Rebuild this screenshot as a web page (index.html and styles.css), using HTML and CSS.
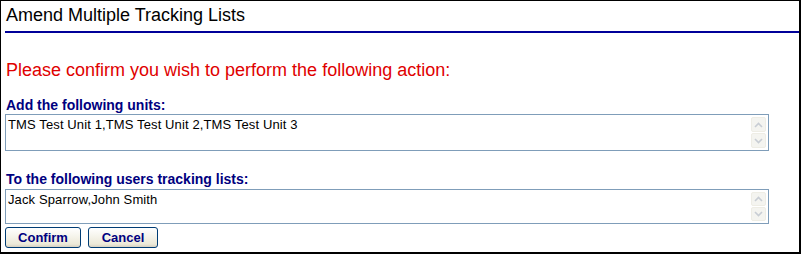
FILE: index.html
```html
<!DOCTYPE html>
<html>
<head>
<meta charset="utf-8">
<link rel="stylesheet" href="styles.css">
</head>
<body>
<div class="frame">
  <div class="title">Amend Multiple Tracking Lists</div>
  <div class="rule"></div>
  <div class="prompt">Please confirm you wish to perform the following action:</div>
  <div class="label first">Add the following units:</div>
  <div class="box tall">
    <div class="box-text">TMS Test Unit 1,TMS Test Unit 2,TMS Test Unit 3</div>
    <div class="scroll">
      <div class="sbtn"><svg width="9" height="6" viewBox="0 0 9 6"><path d="M1 5 L4.5 1.5 L8 5" fill="none" stroke="#c8cdd4" stroke-width="1.6"/></svg></div>
      <div class="sbtn"><svg width="9" height="6" viewBox="0 0 9 6"><path d="M1 1 L4.5 4.5 L8 1" fill="none" stroke="#c8cdd4" stroke-width="1.6"/></svg></div>
    </div>
  </div>
  <div class="label second">To the following users tracking lists:</div>
  <div class="box short">
    <div class="box-text">Jack Sparrow,John Smith</div>
    <div class="scroll">
      <div class="sbtn"><svg width="9" height="6" viewBox="0 0 9 6"><path d="M1 5 L4.5 1.5 L8 5" fill="none" stroke="#c8cdd4" stroke-width="1.6"/></svg></div>
      <div class="sbtn"><svg width="9" height="6" viewBox="0 0 9 6"><path d="M1 1 L4.5 4.5 L8 1" fill="none" stroke="#c8cdd4" stroke-width="1.6"/></svg></div>
    </div>
  </div>
  <div class="buttons">
    <button class="btn confirm">Confirm</button>
    <button class="btn cancel">Cancel</button>
  </div>
</div>
</body>
</html>
```
FILE: styles.css
```css
html, body {
  margin: 0;
  padding: 0;
  background: #ffffff;
}
body {
  width: 801px;
  height: 254px;
  font-family: "Liberation Sans", Arial, sans-serif;
}
.frame {
  box-sizing: border-box;
  width: 801px;
  height: 254px;
  border: 1px solid #000000;
  border-right-width: 2px;
  border-bottom-width: 2px;
  padding: 0 0 0 4px;
}
.title {
  font-size: 18px;
  color: #000000;
  padding: 4px 0 0 1px;
  height: 26px;
  box-sizing: border-box;
  line-height: 21px;
}
.rule {
  height: 2px;
  background: #000099;
  margin-top: 4px;
}
.prompt {
  color: #e00000;
  font-size: 18px;
  line-height: 20px;
  margin-top: 27px;
  padding-left: 1px;
}
.label {
  color: #000080;
  font-weight: bold;
  font-size: 14px;
  line-height: 15px;
  padding-left: 1px;
}
.label.first {
  margin-top: 18px;
}
.label.second {
  margin-top: 21px;
}
.box {
  display: flex;
  width: 764px;
  box-sizing: border-box;
  border: 1px solid #7f9db9;
  background: #fff;
}
.box.tall {
  height: 37px;
  margin-top: 1px;
}
.box.short {
  height: 35px;
  margin-top: 2px;
}
.box-text {
  flex: 1;
  font-size: 13px;
  line-height: 15px;
  letter-spacing: 0.12px;
  padding: 2px 0 0 2px;
  color: #000;
}
.scroll {
  width: 16px;
  padding: 2px 1px 0 0;
  display: flex;
  flex-direction: column;
  gap: 1px;
}
.sbtn {
  width: 15px;
  height: 15px;
  box-sizing: border-box;
  border: 1px solid #eeede5;
  background: #f4f4f0;
  border-radius: 2px;
  display: flex;
  align-items: center;
  justify-content: center;
}
.box.short .sbtn {
  height: 14px;
}
.buttons {
  display: flex;
  gap: 7px;
  margin-top: 3px;
}
.btn {
  font-family: "Liberation Sans", Arial, sans-serif;
  font-weight: bold;
  font-size: 13px;
  color: #000080;
  height: 21px;
  padding: 0;
  border: 1px solid #003c74;
  border-radius: 3px;
  background: linear-gradient(#ffffff, #ece9d8 85%, #d6d0c0);
  line-height: 17px;
}
.btn.confirm {
  width: 76px;
}
.btn.cancel {
  width: 70px;
}
```
